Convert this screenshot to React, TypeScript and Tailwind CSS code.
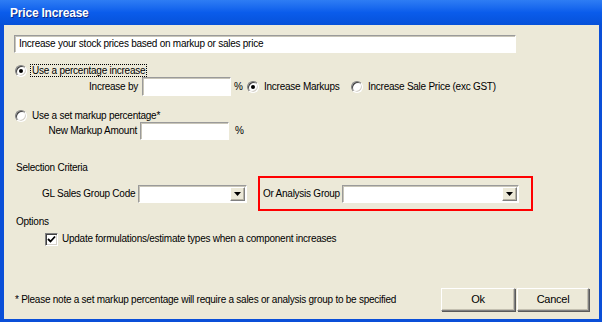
import React from "react";

const font = "font-['Liberation_Sans',Arial,sans-serif]";

function Radio({ checked }: { checked?: boolean }) {
  return (
    <div className="relative w-[12px] h-[12px] shrink-0 rounded-full bg-white border border-t-[#808080] border-l-[#808080] border-b-white border-r-white shadow-[inset_1px_1px_0_#404040,inset_-1px_-1px_0_#d4d0c8]">
      {checked && (
        <div className="absolute left-[3px] top-[3px] w-[4px] h-[4px] rounded-full bg-black" />
      )}
    </div>
  );
}

function TextBox({ w, h = 18 }: { w: number; h?: number }) {
  return (
    <div
      className="shrink-0 bg-white border border-t-[#9a9a9a] border-l-[#9a9a9a] border-b-white border-r-white shadow-[inset_1px_1px_0_#c8c5b8]"
      style={{ width: w, height: h }}
    />
  );
}

function Combo({ w }: { w: number }) {
  return (
    <div
      className="shrink-0 h-[18px] bg-white flex items-stretch justify-end border border-t-[#9a9a9a] border-l-[#9a9a9a] border-b-white border-r-white shadow-[inset_1px_1px_0_#c8c5b8] p-[1px]"
      style={{ width: w }}
    >
      <div className="w-[15px] bg-[#ECE9D8] border border-t-white border-l-white border-b-[#808080] border-r-[#808080] flex items-center justify-center shadow-[inset_-1px_-1px_0_#b8b4a4]">
        <svg width="7" height="4" viewBox="0 0 7 4">
          <path d="M0 0 H7 L3.5 4 Z" fill="#000" />
        </svg>
      </div>
    </div>
  );
}

function Button({ w, label }: { w: number; label: string }) {
  return (
    <div
      className="h-[23px] flex items-center justify-center text-[11px] bg-[#ECE9D8] border border-t-white border-l-white border-b-[#808080] border-r-[#808080] shadow-[inset_-1px_-1px_0_#c3bfb0,1px_1px_0_#5a5a5a]"
      style={{ width: w }}
    >
      {label}
    </div>
  );
}

export default function App() {
  return (
    <div className={`w-[602px] h-[322px] bg-[#0A4FD8] flex flex-col ${font} text-[10px] text-black leading-none tracking-[-0.25px] whitespace-nowrap`}>
      {/* Title bar */}
      <div className="h-[25px] shrink-0 bg-gradient-to-b from-[#2E7DF4] via-[#0A5CEB] to-[#0651D9] flex items-center pl-[10px]">
        <span className="text-white font-bold text-[12px] tracking-[-0.2px] [text-shadow:1px_1px_0_#0b2a8a]">
          Price Increase
        </span>
      </div>
      {/* Body */}
      <div className="flex-1 ml-[4px] mr-[3px] mb-[3px] bg-[#ECE9D8] flex flex-col">
        {/* Description */}
        <div className="mt-[10px] ml-[10px] w-[502px] h-[18px] bg-white border border-t-[#9a9a9a] border-l-[#9a9a9a] border-b-white border-r-white shadow-[inset_1px_1px_0_#c8c5b8] flex items-center pl-[4px]">
          Increase your stock prices based on markup or sales price
        </div>

        {/* Row 1 */}
        <div className="mt-[11px] h-[13px] flex items-center ml-[11px]">
          <Radio checked />
          <div className="ml-[3px] h-[13px] px-[1px] flex items-center border border-dotted border-black">
            Use a percentage increase
          </div>
        </div>

        {/* Row 2 */}
        <div className="h-[19px] flex items-center">
          <div className="w-[134px] text-right">Increase by</div>
          <div className="ml-[4px]">
            <TextBox w={89} h={19} />
          </div>
          <div className="ml-[3px] w-[9px]">%</div>
          <div className="ml-[4px]">
            <Radio checked />
          </div>
          <div className="ml-[5px] w-[87px]">Increase Markups</div>
          <Radio />
          <div className="ml-[5px]">Increase Sale Price (exc GST)</div>
        </div>

        {/* Row 3 */}
        <div className="mt-[13px] h-[13px] flex items-center ml-[11px]">
          <Radio />
          <div className="ml-[5px]">Use a set markup percentage*</div>
        </div>

        {/* Row 4 */}
        <div className="h-[18px] flex items-center">
          <div className="w-[133px] text-right">New Markup Amount</div>
          <div className="ml-[3px]">
            <TextBox w={89} h={18} />
          </div>
          <div className="ml-[6px]">%</div>
        </div>

        {/* Selection Criteria */}
        <div className="mt-[21px] h-[14px] flex items-center ml-[12px]">Selection Criteria</div>

        <div className="mt-[1px] h-[35px] flex items-center">
          <div className="ml-[38px] w-[91px]">GL Sales Group Code</div>
          <div className="ml-[5px]">
            <Combo w={109} />
          </div>
          <div className="ml-[11px] w-[275px] h-[35px] border-2 border-[#FF0000] flex items-center pl-[3px]">
            <div className="w-[79px]">Or Analysis Group</div>
            <Combo w={177} />
          </div>
        </div>

        {/* Options */}
        <div className="mt-[4px] h-[14px] flex items-center ml-[12px]">Options</div>

        <div className="mt-[3px] h-[14px] flex items-center ml-[41px]">
          <div className="w-[13px] h-[13px] bg-white border border-t-[#808080] border-l-[#808080] border-b-white border-r-white shadow-[inset_1px_1px_0_#404040,inset_-1px_-1px_0_#d4d0c8] flex items-center justify-center">
            <svg width="9" height="9" viewBox="0 0 9 9">
              <path d="M1 4 L3.5 6.5 L8 1.5" stroke="#000" strokeWidth="1.8" fill="none" />
            </svg>
          </div>
          <div className="ml-[4px]">Update formulations/estimate types when a component increases</div>
        </div>

        {/* Footer */}
        <div className="mt-auto mb-[8px] flex items-center pr-[10px]">
          <div className="ml-[11px] flex-1">
            * Please note a set markup percentage will require a sales or analysis group to be specified
          </div>
          <Button w={74} label="Ok" />
          <div className="ml-[2px]">
            <Button w={72} label="Cancel" />
          </div>
        </div>
      </div>
    </div>
  );
}
